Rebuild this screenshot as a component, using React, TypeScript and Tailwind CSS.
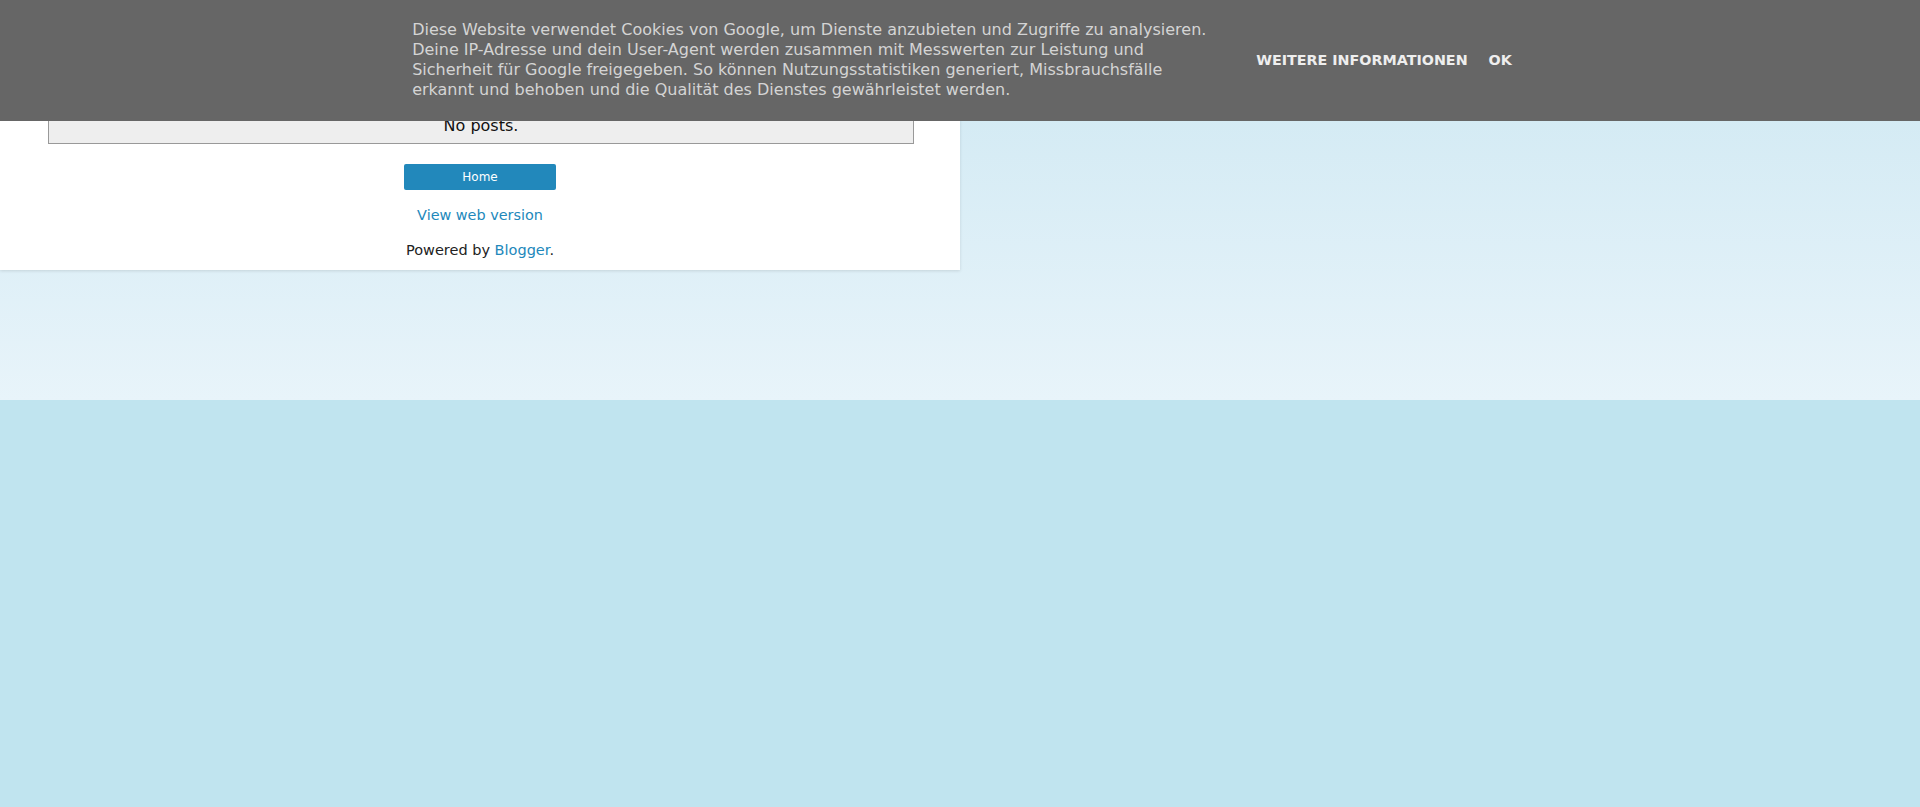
import React from 'react'

export default function App() {
  return (
    <div className="relative min-h-[807px] w-full bg-[#c0e4ef] font-['DejaVu_Sans',sans-serif]">
      {/* top gradient cap */}
      <div className="h-[400px] w-full bg-gradient-to-b from-[#cce7f2] to-[#e8f4fa]">
        {/* content panel */}
        <div className="flex w-[960px] flex-col items-center bg-white pt-[100px] pb-[10px] shadow-[0_1px_3px_rgba(0,0,0,0.12)]">
          <div className="ml-[2px] w-[866px] border border-[#999] bg-[#eeeeee] pt-[15px] pb-[7px] text-center text-[16px] leading-[20px] text-[#111]">
            No posts.
          </div>

          <a
            href="#"
            className="mt-[20px] flex h-[26px] w-[152px] items-center justify-center rounded-[2px] bg-[#2288bb] text-[12px] text-white"
          >
            Home
          </a>

          <a href="#" className="mt-[15px] text-[14.4px] leading-[20px] text-[#2288bb]">
            View web version
          </a>

          <p className="mt-[15px] text-[14.5px] leading-[20px] text-[#222]">
            Powered by <a href="#" className="text-[#2288bb]">Blogger</a>.
          </p>
        </div>
      </div>

      {/* cookie notice */}
      <div className="absolute inset-x-0 top-0 flex h-[121px] items-center justify-center bg-[#666666] pb-[2px] pl-[4px]">
        <div className="w-[800px] text-[16px] leading-[20px] text-[#d4d4d4]">
          Diese Website verwendet Cookies von Google, um Dienste anzubieten und Zugriffe zu analysieren. Deine
          IP-Adresse und dein User-Agent werden zusammen mit Messwerten zur Leistung und Sicherheit für Google
          freigegeben. So können Nutzungsstatistiken generiert, Missbrauchsfälle erkannt und behoben und die
          Qualität des Dienstes gewährleistet werden.
        </div>
        <div className="ml-[44px] flex items-center gap-[21px] pt-[3px] text-[14.3px] font-bold uppercase text-[#eeeeee]">
          <a href="#">Weitere Informationen</a>
          <a href="#">OK</a>
        </div>
      </div>
    </div>
  )
}
